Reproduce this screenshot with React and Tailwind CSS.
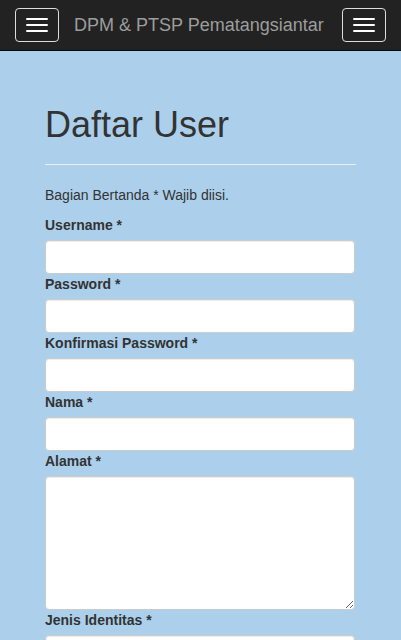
const FIELDS_BEFORE = ['Username', 'Password', 'Konfirmasi Password', 'Nama'];

function Toggle() {
  return (
    <button
      type="button"
      className="flex h-[34px] w-[44px] flex-col items-center justify-center gap-[4px] rounded-[4px] border border-[#ddd]"
    >
      <span className="block h-[2px] w-[22px] rounded-[1px] bg-white" />
      <span className="block h-[2px] w-[22px] rounded-[1px] bg-white" />
      <span className="block h-[2px] w-[22px] rounded-[1px] bg-white" />
    </button>
  );
}

function Label({ children }) {
  return (
    <label className="mb-[5px] block h-[20px] text-[14px] font-bold leading-[20px] text-[#333]">
      {children} *
    </label>
  );
}

const inputCls =
  'block h-[34px] w-[310px] rounded-[4px] border border-[#ccc] bg-white shadow-[inset_0_1px_1px_rgba(0,0,0,0.075)]';

export default function App() {
  return (
    <div className="min-h-[640px] bg-[#acd0ec] font-[family-name:'Liberation_Sans',Arial,sans-serif]">
      <nav className="flex h-[51px] items-center border-b border-[#080808] bg-[#222] px-[15px]">
        <Toggle />
        <span className="ml-[15px] flex-1 text-[18px] leading-[20px] text-[#9d9d9d]">DPM &amp; PTSP Pematangsiantar</span>
        <Toggle />
      </nav>

      <main className="px-[45px] pt-[54px]">
        <div className="mb-[20px] border-b border-[#eee] pb-[9px]">
          <h1 className="mb-[10px] text-[36px] font-medium leading-[40px] text-[#333]">Daftar User</h1>
        </div>
        <p className="mb-[10px] text-[14px] leading-[20px] text-[#333]">Bagian Bertanda * Wajib diisi.</p>

        {FIELDS_BEFORE.map((f) => (
          <div key={f}>
            <Label>{f}</Label>
            <input type={f.includes('Password') ? 'password' : 'text'} className={inputCls} />
          </div>
        ))}

        <div>
          <Label>Alamat</Label>
          <textarea className="block h-[134px] w-[310px] rounded-[4px] border border-[#ccc] bg-white shadow-[inset_0_1px_1px_rgba(0,0,0,0.075)]" />
        </div>

        <div>
          <Label>Jenis Identitas</Label>
          <input type="text" className={inputCls} />
        </div>
      </main>
    </div>
  );
}
